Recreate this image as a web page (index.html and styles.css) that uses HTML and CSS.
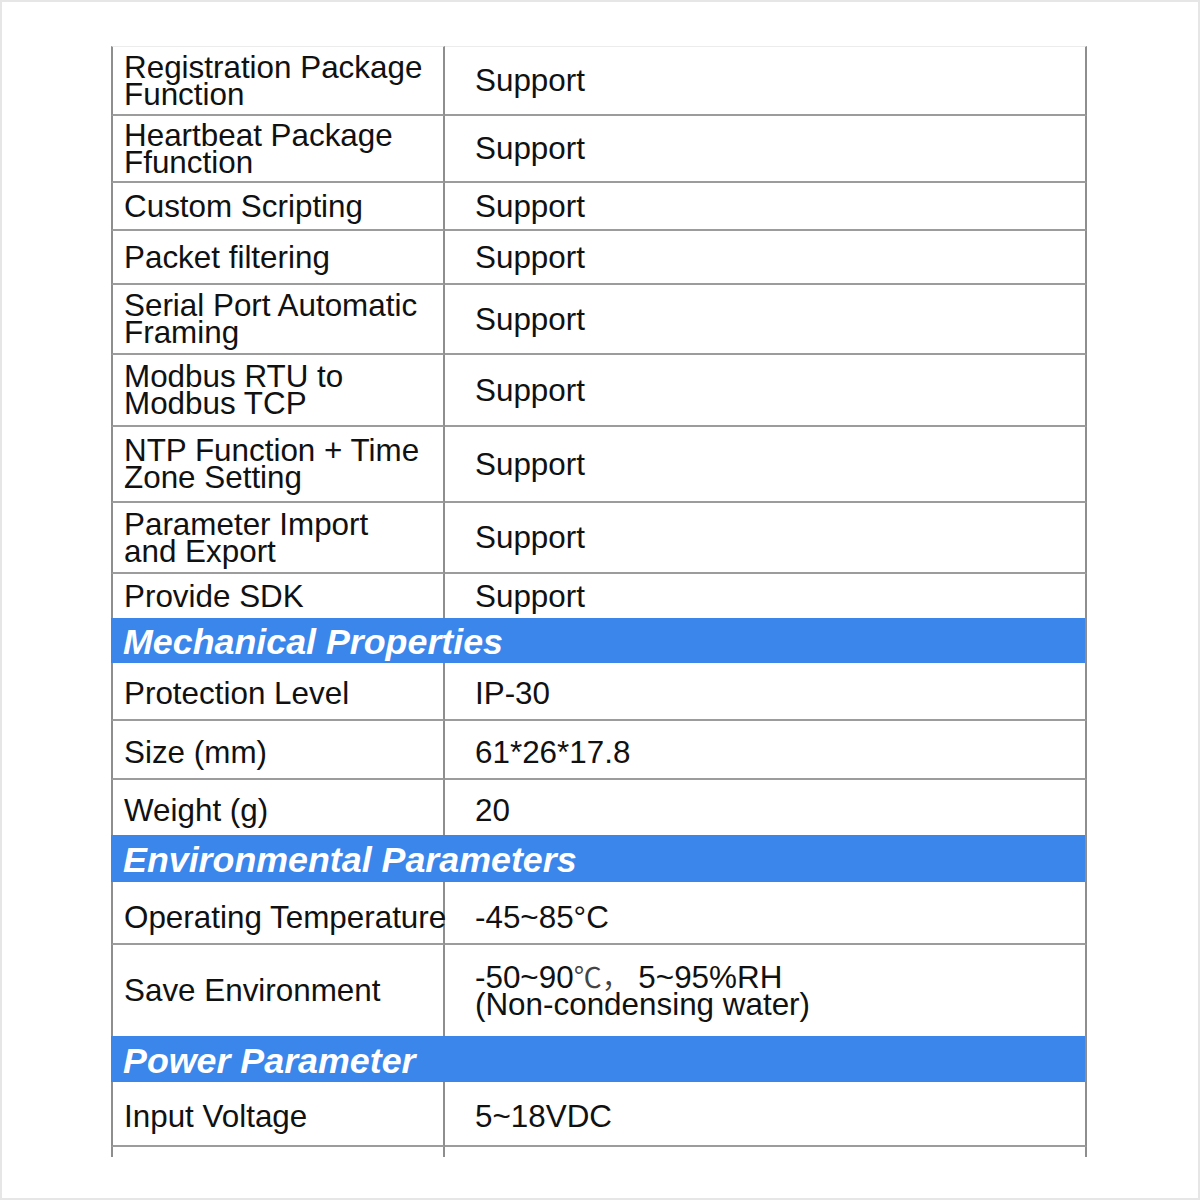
FILE: index.html
```html
<!DOCTYPE html>
<html lang="en">
<head>
<meta charset="utf-8">
<title>Specifications</title>
<link rel="stylesheet" href="styles.css">
</head>
<body>
<div class="frame">
  <div class="spec">
    <div class="label first"><span>Registration Package<br>Function</span></div>
    <div class="value first"><span>Support</span></div>
    <div class="label"><span>Heartbeat Package<br>Ffunction</span></div>
    <div class="value"><span>Support</span></div>
    <div class="label"><span>Custom Scripting</span></div>
    <div class="value"><span>Support</span></div>
    <div class="label"><span>Packet filtering</span></div>
    <div class="value"><span>Support</span></div>
    <div class="label"><span>Serial Port Automatic<br>Framing</span></div>
    <div class="value"><span>Support</span></div>
    <div class="label"><span>Modbus RTU to<br>Modbus TCP</span></div>
    <div class="value"><span>Support</span></div>
    <div class="label"><span>NTP Function + Time<br>Zone Setting</span></div>
    <div class="value"><span>Support</span></div>
    <div class="label"><span>Parameter Import<br>and Export</span></div>
    <div class="value"><span>Support</span></div>
    <div class="label"><span>Provide SDK</span></div>
    <div class="value"><span>Support</span></div>

    <div class="section">Mechanical Properties</div>
    <div class="label single"><span>Protection Level</span></div>
    <div class="value single"><span>IP-30</span></div>
    <div class="label single"><span>Size (mm)</span></div>
    <div class="value single"><span>61*26*17.8</span></div>
    <div class="label single"><span>Weight (g)</span></div>
    <div class="value single"><span>20</span></div>

    <div class="section">Environmental Parameters</div>
    <div class="label single low nowrap"><span>Operating Temperature</span></div>
    <div class="value single low"><span>-45~85°C</span></div>
    <div class="label"><span>Save Environment</span></div>
    <div class="value"><span>-50~90<span class="cjk">℃，</span>&nbsp;5~95%RH<br>(Non-condensing water)</span></div>

    <div class="section">Power Parameter</div>
    <div class="label single"><span>Input Voltage</span></div>
    <div class="value single"><span>5~18VDC</span></div>
    <div class="label tail"></div>
    <div class="value tail"></div>
  </div>
</div>
</body>
</html>
```

FILE: styles.css
```css
html, body {
  margin: 0;
  padding: 0;
  background: #ffffff;
}

.frame {
  box-sizing: border-box;
  width: 1200px;
  height: 1200px;
  border: 2px solid #e6e6e6;
  overflow: hidden;
  padding-top: 44px;
  font-family: "Liberation Sans", Arial, sans-serif;
  color: #111111;
}

.spec {
  margin-left: 109px;
  width: 976px;
  display: grid;
  grid-template-columns: 334px 1fr;
  grid-template-rows: 70px 67px 48px 54px 70px 72px 76px 71px 46px 43px 58px 59px 57px 45px 63px 93px 44px 65px 10px;
}

.label,
.value {
  box-sizing: border-box;
  display: flex;
  align-items: center;
  font-size: 31.4px;
  line-height: 27px;
  border-bottom: 2px solid #9c9c9c;
  border-right: 2px solid #8e8e8e;
}

.label {
  border-left: 2px solid #8e8e8e;
  padding-left: 11px;
}

.value {
  padding-left: 30px;
}

.single {
  padding-top: 5px;
}

.low {
  padding-top: 10px;
}

.first {
  border-top: 1px solid #ececec;
}

.nowrap {
  white-space: nowrap;
}

.cjk {
  font-family: "Noto Sans CJK SC", sans-serif;
  font-size: 28px;
  color: #444444;
}

.section {
  grid-column: 1 / -1;
  margin-top: -2px;
  box-sizing: border-box;
  background: #3a86ea;
  border-right: 2px solid #8e8e8e;
  color: #ffffff;
  font-size: 35.8px;
  font-weight: bold;
  font-style: italic;
  display: flex;
  align-items: center;
  padding-left: 12px;
  padding-top: 3px;
  line-height: 40px;
}

.tail {
  border-bottom: none;
}
```
